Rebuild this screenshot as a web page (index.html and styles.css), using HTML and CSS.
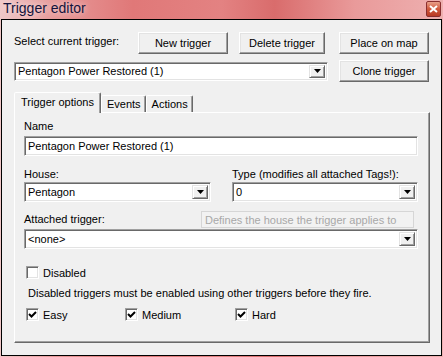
FILE: index.html
```html
<!DOCTYPE html>
<html lang="en">
<head>
	<meta charset="UTF-8">
	<meta name="viewport" content="width=device-width, initial-scale=1.0">
	<title>Trigger editor</title>
	<link rel="stylesheet" href="styles.css">
</head>
<body>

	<div class="window">
		<div class="titlebar">
			<span class="titlebar__text">Trigger editor</span>
			<span class="titlebar__close">
				<svg width="9" height="8" viewBox="0 0 9 8"><path d="M1 1 L8 7 M8 1 L1 7" stroke="#fff" stroke-width="2"/></svg>
			</span>
		</div>

		<div class="client">
			<div class="toolbar">
				<span class="toolbar__label">Select current trigger:</span>
				<button class="btn btn--new">New trigger</button>
				<button class="btn btn--delete">Delete trigger</button>
				<button class="btn btn--place">Place on map</button>
			</div>

			<div class="toolbar toolbar--second">
				<div class="combo combo--trigger">
					<span class="combo__text">Pentagon Power Restored (1)</span>
					<span class="combo__arrow"><svg width="7" height="4" viewBox="0 0 7 4"><path d="M0 0 H7 L3.5 4 Z" fill="#000"/></svg></span>
				</div>
				<button class="btn btn--place">Clone trigger</button>
			</div>

			<div class="tabs">
				<div class="tab tab--active">Trigger options</div>
				<div class="tab">Events</div>
				<div class="tab">Actions</div>
			</div>

			<div class="panel">
				<div class="field__label">Name</div>
				<div class="edit">Pentagon Power Restored (1)</div>

				<div class="field-row">
					<div class="field field--house">
						<div class="field__label">House:</div>
						<div class="combo">
							<span class="combo__text">Pentagon</span>
							<span class="combo__arrow"><svg width="7" height="4" viewBox="0 0 7 4"><path d="M0 0 H7 L3.5 4 Z" fill="#000"/></svg></span>
						</div>
					</div>
					<div class="field field--type">
						<div class="field__label">Type (modifies all attached Tags!):</div>
						<div class="combo">
							<span class="combo__text">0</span>
							<span class="combo__arrow"><svg width="7" height="4" viewBox="0 0 7 4"><path d="M0 0 H7 L3.5 4 Z" fill="#000"/></svg></span>
						</div>
					</div>
				</div>

				<div class="field field--attached">
					<div class="field__label">Attached trigger:</div>
					<div class="combo">
						<span class="combo__text">&lt;none&gt;</span>
						<span class="combo__arrow"><svg width="7" height="4" viewBox="0 0 7 4"><path d="M0 0 H7 L3.5 4 Z" fill="#000"/></svg></span>
					</div>
					<div class="tooltip">Defines the house the trigger applies to</div>
				</div>

				<label class="check check--disabled">
					<span class="check__box"></span>
					<span>Disabled</span>
				</label>
				<div class="note">Disabled triggers must be enabled using other triggers before they fire.</div>

				<div class="difficulty">
					<label class="check check--easy">
						<span class="check__box"><svg width="9" height="9" viewBox="0 0 9 9"><path d="M1 4 L3.5 6.5 L8 2" fill="none" stroke="#000" stroke-width="2"/></svg></span>
						<span>Easy</span>
					</label>
					<label class="check check--medium">
						<span class="check__box"><svg width="9" height="9" viewBox="0 0 9 9"><path d="M1 4 L3.5 6.5 L8 2" fill="none" stroke="#000" stroke-width="2"/></svg></span>
						<span>Medium</span>
					</label>
					<label class="check">
						<span class="check__box"><svg width="9" height="9" viewBox="0 0 9 9"><path d="M1 4 L3.5 6.5 L8 2" fill="none" stroke="#000" stroke-width="2"/></svg></span>
						<span>Hard</span>
					</label>
				</div>
			</div>
		</div>
	</div>

</body>
</html>
```

FILE: styles.css
```css
* {
    margin: 0;
    padding: 0;
    box-sizing: border-box;
}

body {
    width: 443px;
    height: 357px;
    overflow: hidden;
    font-family: 'Liberation Sans', Arial, sans-serif;
    font-size: 11px;
    color: #000;
}

.window {
    width: 443px;
    height: 357px;
    display: flex;
    flex-direction: column;
    background: linear-gradient(90deg, #f0c8c8 0%, #e79a9a 12%, #e07878 30%, #e38282 50%, #d96c6c 62%, #e99a9a 80%, #eeb0b0 100%);
}

.titlebar {
    height: 19px;
    display: flex;
    align-items: flex-start;
    justify-content: space-between;
    padding: 0 2px 0 3px;
}

.titlebar__text {
    font-size: 14px;
    line-height: 16px;
    color: #14143c;
    text-shadow: 0 0 6px rgba(255, 255, 255, 0.8);
}

.titlebar__close {
    width: 15px;
    height: 16px;
    margin-top: 1px;
    display: flex;
    align-items: center;
    justify-content: center;
    border: 1px solid #8a2f2f;
    border-radius: 2px;
    background: linear-gradient(180deg, #e8a08a 0%, #d0583c 50%, #b83a24 100%);
}

.client {
    flex: 1;
    margin: 0 1px 1px;
    border: 1px solid #000;
    background: #f0f0f0;
    padding: 12px 12px 0;
}

.toolbar {
    display: flex;
    align-items: center;
    height: 22px;
}

.toolbar--second {
    margin-top: 6px;
}

.toolbar__label {
    width: 124px;
    align-self: flex-start;
    padding-top: 3px;
}

.btn {
    height: 22px;
    font-family: inherit;
    font-size: 11px;
    color: #000;
    background: #f0f0f0;
    border: 1px solid;
    border-color: #fff #696969 #696969 #fff;
    box-shadow: inset -1px -1px #a0a0a0, inset 1px 1px #e3e3e3;
}

.btn--new {
    width: 90px;
}

.btn--delete {
    width: 86px;
    margin-left: 11px;
}

.btn--place {
    width: 90px;
    margin-left: auto;
}

.combo {
    height: 20px;
    display: flex;
    align-items: center;
    justify-content: space-between;
    background: #fff;
    border: 1px solid;
    border-color: #a0a0a0 #fff #fff #a0a0a0;
    box-shadow: inset 1px 1px #696969, inset -1px -1px #e3e3e3;
    padding: 2px 2px 2px 3px;
}

.combo--trigger {
    width: 314px;
    height: 19px;
}

.combo__arrow {
    width: 16px;
    height: 100%;
    display: flex;
    align-items: center;
    justify-content: center;
    background: #f0f0f0;
    border: 1px solid;
    border-color: #e3e3e3 #696969 #696969 #e3e3e3;
    box-shadow: inset 1px 1px #fff, inset -1px -1px #a0a0a0;
}

.tabs {
    display: flex;
    align-items: flex-end;
    height: 20px;
    margin-top: 10px;
    padding-left: 1px;
    position: relative;
    z-index: 1;
}

.tab {
    height: 17px;
    padding: 2px 4px 0 5px;
    border: 1px solid;
    border-bottom: none;
    border-color: #fff #696969 transparent #fff;
    box-shadow: inset -1px 0 #a0a0a0;
    border-radius: 2px 2px 0 0;
    background: #f0f0f0;
}

.tab--active {
    margin-left: -1px;
    padding: 3px 6px 0 6px;
    margin-bottom: -1px;
    height: 21px;
}

.panel {
    width: 416px;
    height: 231px;
    border: 1px solid;
    border-color: #fff #696969 #696969 #fff;
    box-shadow: inset -1px -1px #a0a0a0;
    padding: 7px 11px 0 9px;
}

.field__label {
    line-height: 13px;
    height: 13px;
    margin-bottom: 3px;
}

.edit {
    height: 20px;
    background: #fff;
    border: 1px solid;
    border-color: #a0a0a0 #fff #fff #a0a0a0;
    box-shadow: inset 1px 1px #696969, inset -1px -1px #e3e3e3;
    padding: 3px 3px 0;
    line-height: 13px;
}

.field-row {
    display: flex;
    justify-content: space-between;
    margin-top: 12px;
}

.field-row .field__label {
    margin-bottom: 1px;
}

.field--house {
    width: 187px;
}

.field--type {
    width: 186px;
}

.field--attached {
    margin-top: 11px;
    position: relative;
}

.tooltip {
    position: absolute;
    left: 177px;
    top: -2px;
    width: 213px;
    height: 17px;
    padding: 1px 3px 0 3px;
    border: 1px solid #d6d6d6;
    background: #f2f2f2;
    color: #a8a8a8;
    line-height: 14px;
    white-space: nowrap;
}

.check {
    display: flex;
    align-items: center;
    height: 13px;
    gap: 4px;
}

.check__box {
    width: 13px;
    height: 13px;
    display: flex;
    align-items: center;
    justify-content: center;
    background: #fff;
    border: 1px solid;
    border-color: #a0a0a0 #fff #fff #a0a0a0;
    box-shadow: inset 1px 1px #696969, inset -1px -1px #e3e3e3;
}

.check--disabled {
    margin-top: 17px;
    margin-left: 2px;
}

.note {
    margin: 8px 0 0 4px;
    line-height: 13px;
}

.difficulty {
    display: flex;
    margin-top: 8px;
    margin-left: 2px;
}

.check--easy {
    width: 99px;
}

.check--medium {
    width: 110px;
}
```
